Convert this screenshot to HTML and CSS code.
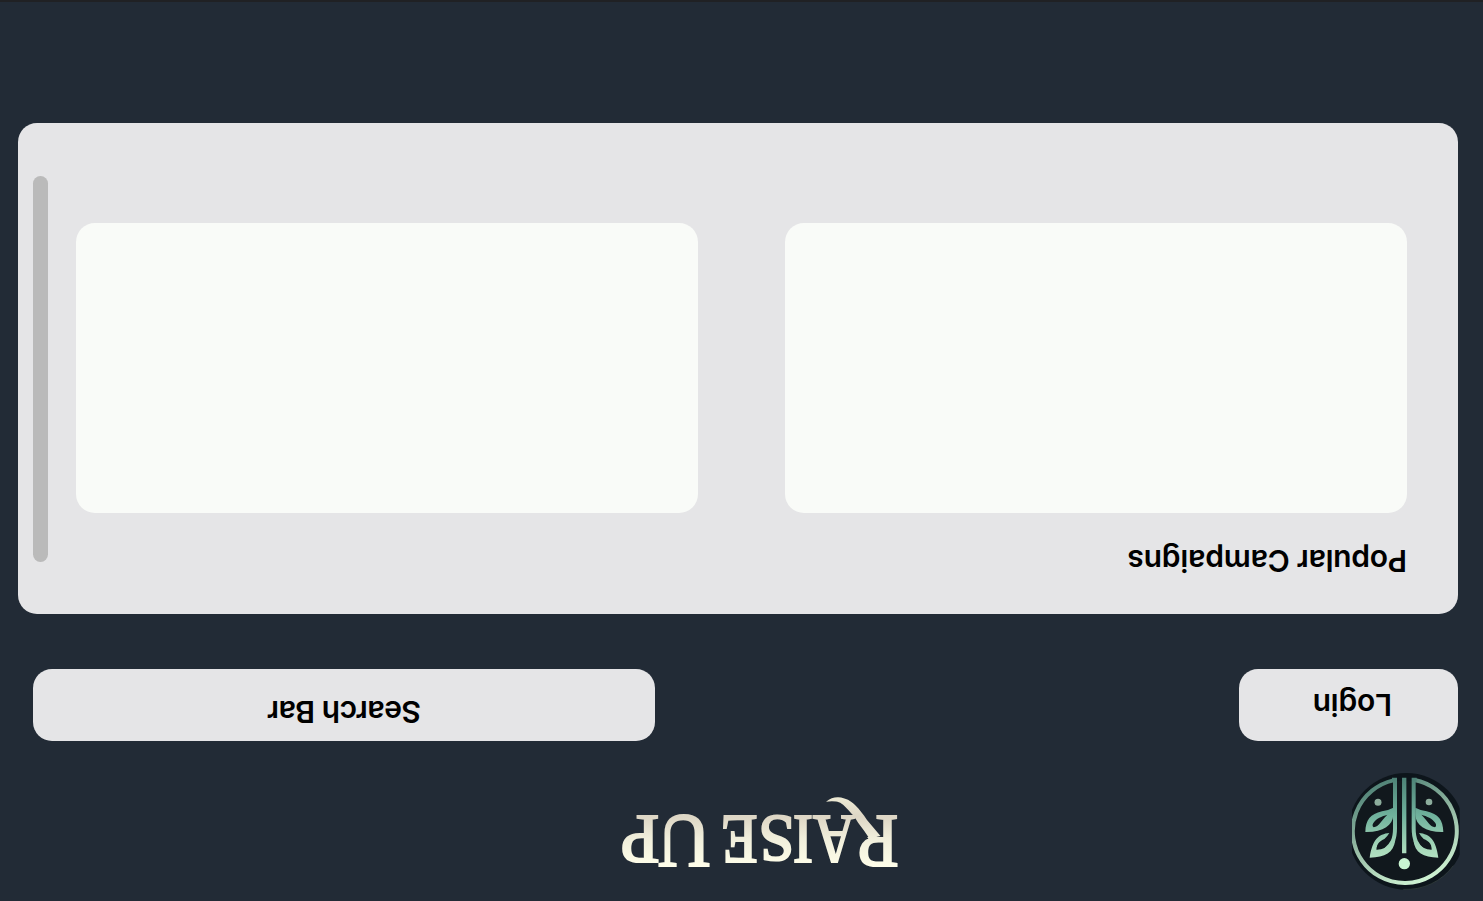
FILE: index.html
```html
<!DOCTYPE html>
<html lang="en">
<head>
<meta charset="utf-8">
<title>Raise Up</title>
<link rel="stylesheet" href="styles.css">
</head>
<body>
<div class="screen">
  <header class="header">
    <svg class="emblem" viewBox="0 0 390 390" role="img" aria-label="Raise Up emblem">
      <defs>
        <linearGradient id="mint" gradientUnits="userSpaceOnUse" x1="0" y1="38" x2="0" y2="360">
          <stop offset="0" stop-color="#4d8276"/>
          <stop offset=".35" stop-color="#6fb19c"/>
          <stop offset=".65" stop-color="#a6d8b9"/>
          <stop offset="1" stop-color="#d3f8d9"/>
        </linearGradient>
        <linearGradient id="ring" gradientUnits="userSpaceOnUse" x1="100" y1="40" x2="230" y2="360">
          <stop offset="0" stop-color="#497d72"/>
          <stop offset=".5" stop-color="#94b9a3"/>
          <stop offset="1" stop-color="#cff3d3"/>
        </linearGradient>
        <clipPath id="edge"><rect x="36" y="0" width="323" height="390"/></clipPath>
      </defs>
      <g transform="rotate(180 195 195)" clip-path="url(#edge)">
        <circle cx="199" cy="199" r="175" fill="#0d151b"/>
        <path d="M340 302A175 175 0 0 1 190 373" fill="none" stroke="#46554f" stroke-width="1.5"/>
        <circle cx="197" cy="199" r="153" fill="#11181d"/>
        <path d="M160 46A156 156 0 1 0 224 45" fill="none" stroke="url(#ring)" stroke-width="12"/>
        <g fill="none" stroke="url(#mint)">
          <path d="M192.600 38V265" stroke-width="13"/>
          <path d="M156 44H165V190C165 222 157 239 136 255" stroke-width="12"/>
          <path d="M230 44H221V190C221 222 229 239 248 255" stroke-width="12"/>
        </g>
        <g fill="url(#mint)" fill-rule="evenodd">
          <path d="M160 128V150C158 181 130 202 76 201C77 165 91 147 126 139Q145 136 160 128ZM142 149C125 154 109 160 100 174Q95 182 101 187C118 184 121 169 142 149Z"/>
          <path d="M148 204C115 207 97 225 89 278C136 277 160 264 166 226L152 232C145 247 129 254 109 254C110 235 132 230 148 204Z"/>
          <path d="M142 220C122 224 108 237 111 253C129 252 130 235 142 220Z" fill="#11181d"/>
          <path d="M226 128V150C228 181 256 202 310 201C309 165 295 147 260 139Q241 136 226 128ZM244 149C261 154 277 160 286 174Q291 182 285 187C268 184 265 169 244 149Z"/>
          <path d="M237 204C270 207 288 225 295 278C249 277 225 264 220 226L234 232C241 247 257 254 275 254C274 235 252 230 237 204Z"/>
          <path d="M243 220C263 224 277 237 274 253C256 252 255 235 243 220Z" fill="#11181d"/>
        </g>
        <circle cx="114" cy="112" r="10.500" fill="#8cad9c"/>
        <circle cx="267" cy="111" r="10" fill="#8cad9c"/>
        <circle cx="193" cy="296" r="17" fill="#c9f5d2"/>
      </g>
    </svg>
    <svg class="wordmark" viewBox="580 10 290 110" role="img" aria-label="Raise Up">
      <defs>
        <linearGradient id="cream" gradientUnits="userSpaceOnUse" x1="0" y1="34" x2="0" y2="104">
          <stop offset="0" stop-color="#fffeea"/>
          <stop offset=".4" stop-color="#f1efdc"/>
          <stop offset=".72" stop-color="#ddd6c5"/>
          <stop offset="1" stop-color="#eeebd5"/>
        </linearGradient>
        <clipPath id="bowl"><path d="M570 10H640V64H607V110H570Z"/></clipPath>
      </defs>
      <g class="letters" fill="url(#cream)" stroke="url(#cream)" stroke-width="2.200">
        <text x="584.500" y="85.500" font-size="77" textLength="46" lengthAdjust="spacingAndGlyphs" clip-path="url(#bowl)">R</text>
        <text x="628" y="85.500" font-size="69" textLength="42" lengthAdjust="spacingAndGlyphs">A</text>
        <text x="670" y="85.500" font-size="70" textLength="20" lengthAdjust="spacingAndGlyphs">I</text>
        <text x="688.500" y="85" font-size="68" textLength="36" lengthAdjust="spacingAndGlyphs">S</text>
        <text x="725.500" y="85.500" font-size="70" textLength="36.500" lengthAdjust="spacingAndGlyphs">E</text>
        <text x="773" y="85" font-size="76" textLength="52" lengthAdjust="spacingAndGlyphs">U</text>
        <text x="823.500" y="85.500" font-size="70" textLength="39" lengthAdjust="spacingAndGlyphs">P</text>
      </g>
      <path d="M602.500 65L613.700 62.500C617 68 621 73 624.700 78C628 84 631 87 634.700 91C640 97 643 99 647 99.500Q652 100 657 99.300Q651 104 644.700 103.700C637 103 632 100 628 96C623 91 620 87 616 81Z" fill="url(#cream)"/>
    </svg>
  </header>
  <nav class="toolbar">
    <button class="pill login">Login</button>
    <button class="pill search">Search Bar</button>
  </nav>
  <main class="panel">
    <section class="campaigns">
      <h2 class="title">Popular Campaigns</h2>
      <div class="cards">
        <article class="card"></article>
        <article class="card"></article>
      </div>
    </section>
    <div class="scrollbar"></div>
  </main>
</div>
</body>
</html>
```
FILE: styles.css
```css
* { box-sizing: border-box; }

body {
  margin: 0;
  background: #222b36;
  overflow: hidden;
}

.screen {
  width: 1483px;
  height: 901px;
  padding: 6px 18px 0 13px;
  background: #222b36;
  border-bottom: 2px solid #202124;
  font-family: Inter, "Liberation Sans", sans-serif;
  color: #000;
  transform: rotate(180deg);
}

.header {
  display: flex;
  height: 154px;
}

.emblem {
  width: 130px;
  height: 130px;
}

.wordmark {
  width: 290px;
  height: 110px;
  margin: 4px 0 0 437px;
}

.letters {
  font-family: "Liberation Serif", serif;
}

.toolbar {
  display: flex;
  justify-content: space-between;
  padding: 0 15px 0 12px;
}

.pill {
  height: 71.5px;
  border: 0;
  border-radius: 19px;
  background: #e5e5e7;
  color: #000;
  font: 600 30px/36px Inter, "Liberation Sans", sans-serif;
  text-align: left;
}

.login {
  width: 219px;
  padding: 0 0 0 66px;
  letter-spacing: -0.2px;
}

.search {
  width: 622px;
  padding: 0 0 14px 234px;
  letter-spacing: -0.5px;
}

.panel {
  display: flex;
  justify-content: space-between;
  width: 1440px;
  height: 491.5px;
  margin: 55px 0 0 12px;
  padding: 0 15px 0 51px;
  border-radius: 19px;
  background: #e5e5e7;
}

.title {
  height: 36px;
  margin: 35px 0 30.5px;
  font-size: 30px;
  line-height: 36px;
  font-weight: 600;
  letter-spacing: -0.22px;
  white-space: nowrap;
}

.cards {
  display: flex;
  gap: 87px;
}

.card {
  width: 621.75px;
  height: 289.5px;
  border-radius: 19px;
  background: #f9fbf8;
}

.scrollbar {
  width: 15px;
  height: 386px;
  margin-top: 52.5px;
  border-radius: 8px;
  background: #bababa;
}
```
